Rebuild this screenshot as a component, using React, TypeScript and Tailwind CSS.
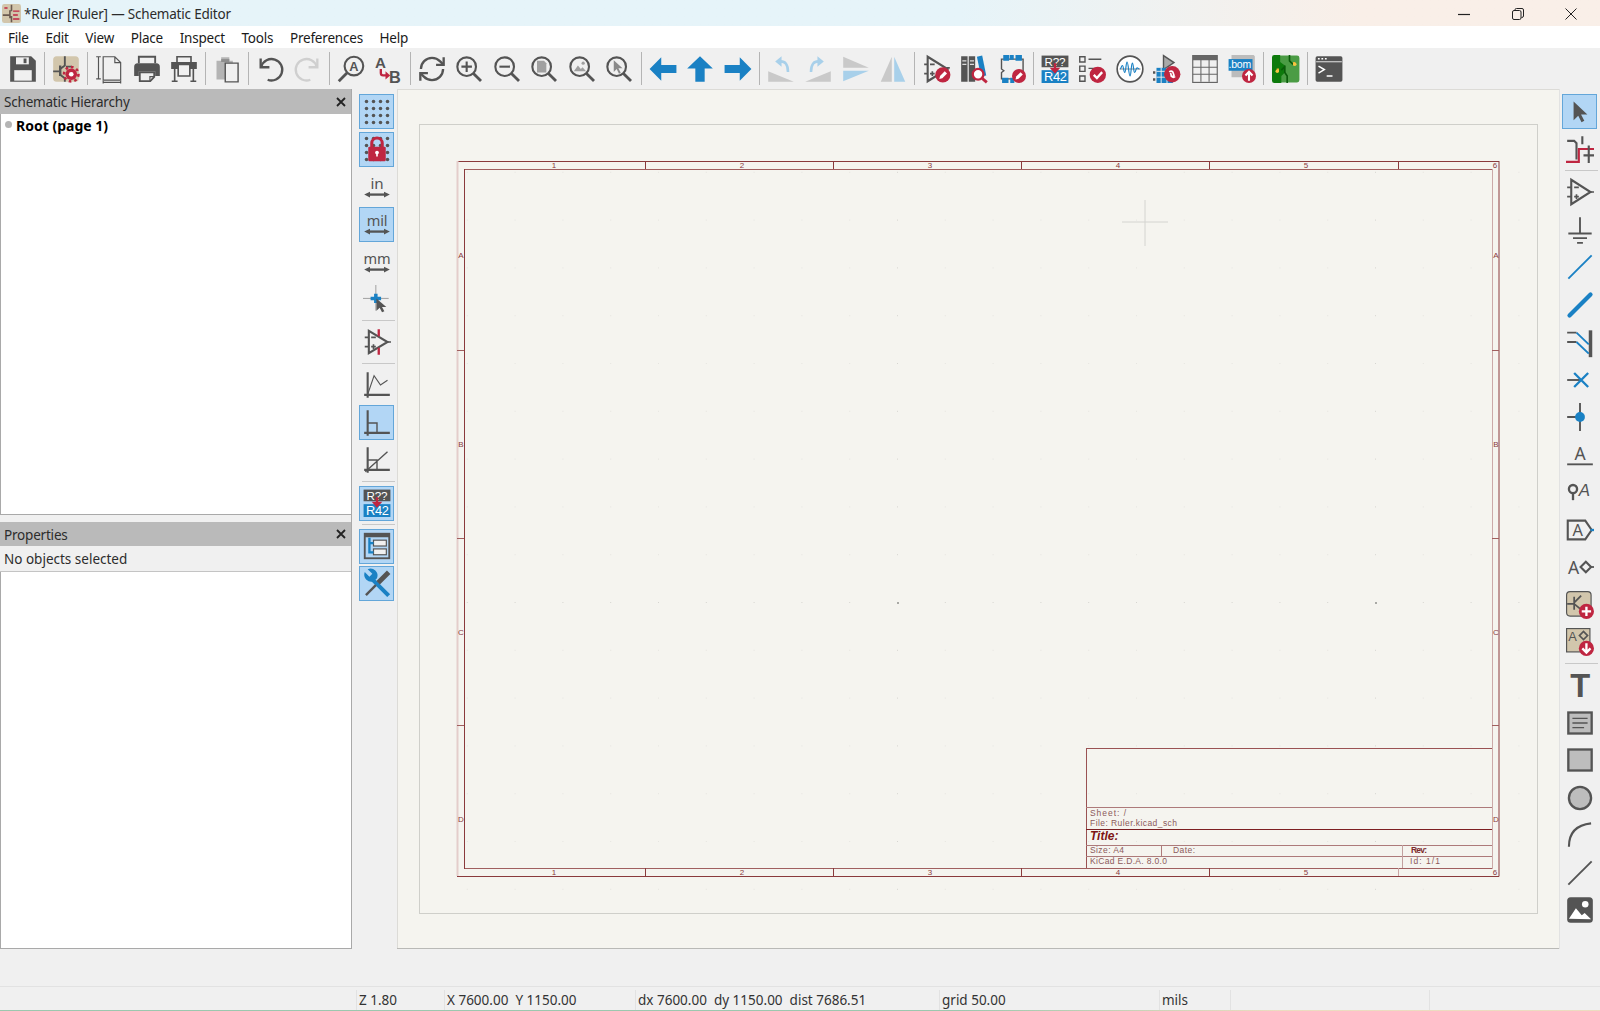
import type { ReactNode } from "react";

const D = "#545454";
const B = "#1a81c4";
const R = "#bf2641";
const TAN = "#d2c6ac";

function Ico({ children, className = "w-[28px] h-[28px]" }: { children: ReactNode; className?: string }) {
  return (
    <svg viewBox="0 0 24 24" className={`${className} overflow-visible`} fill="none" strokeLinecap="butt">
      {children}
    </svg>
  );
}

function Btn({ active, children }: { active?: boolean; children: ReactNode }) {
  return (
    <div
      className={`flex shrink-0 items-center justify-center w-[35px] h-[35px] ${
        active ? "bg-[#b2d6f5] border border-[#63a6d9]" : ""
      }`}
    >
      {children}
    </div>
  );
}

function Txt({ x, y, size, fill = D, bold, italic, children }: { x: number; y: number; size: number; fill?: string; bold?: boolean; italic?: boolean; children: ReactNode }) {
  return (
    <text
      x={x}
      y={y}
      fontSize={size}
      fill={fill}
      fontWeight={bold ? 700 : 400}
      fontStyle={italic ? "italic" : "normal"}
      className="font-['Liberation_Sans']"
    >
      {children}
    </text>
  );
}

// small red badge with white content, used by several tools
function Badge({ cx = 18, cy = 18, r = 5.5, children }: { cx?: number; cy?: number; r?: number; children?: ReactNode }) {
  return (
    <>
      <circle cx={cx} cy={cy} r={r} fill={R} />
      {children}
    </>
  );
}

const Save = () => (
  <Ico>
    <path d="M1 1h18l4 4v18H1z" fill={D} />
    <path d="M6 2h11v6H6z" fill="#f0f0f0" />
    <path d="M12.5 3h2.5v4h-2.5z" fill={D} />
    <path d="M4.5 13h15v9h-15z" fill="#f0f0f0" />
  </Ico>
);

const SchSetup = () => (
  <Ico>
    <rect x="1" y="1" width="22" height="22" rx="3" fill={TAN} />
    <path d="M11 1v8l-4 3v5l4 3v3M1 14h6M12 10l5 0" stroke={D} strokeWidth="1.6" />
    <path d="M7 9v9" stroke={D} strokeWidth="2" />
    <circle cx="16.5" cy="16.5" r="5" fill={R} />
    <circle cx="16.5" cy="16.5" r="6.2" stroke={R} strokeWidth="2.2" strokeDasharray="2.2 2.6" />
    <circle cx="16.5" cy="16.5" r="2" fill="#fff" />
  </Ico>
);

const PageSetup = () => (
  <Ico>
    <path d="M7 1.5h10l5 5v15H7zM17 1.5v5h5" stroke={D} strokeWidth="1" />
    <path d="M3 1.5v19M1 1.5h4M1 20.5h4M7 23.5h15M7 22v2.5M22 22v2.5" stroke={D} strokeWidth="1" />
  </Ico>
);

const Print = () => (
  <Ico>
    <path d="M5 7V1.5h14V7" stroke={D} strokeWidth="1.6" />
    <path d="M1 10a3 3 0 013-3h16a3 3 0 013 3v8h-4v-4H5v4H1z" fill={D} />
    <path d="M5.8 14.8h12.4v4l-3.4 3.6h-9z" stroke={D} strokeWidth="1.6" fill="#f0f0f0" />
    <path d="M14.5 22v-3.5h3.5" stroke={D} strokeWidth="1" />
  </Ico>
);

const Plot = () => (
  <Ico>
    <path d="M6 6V1.5h12V6" stroke={D} strokeWidth="1.4" />
    <path d="M1 6h22v6H1z" fill={D} />
    <path d="M7 8h10v10H7z" stroke={D} strokeWidth="1.4" fill="#f0f0f0" />
    <path d="M4 12v10M20 12v10M1.5 22.5h5M17.5 22.5h5" stroke={D} strokeWidth="1.4" />
  </Ico>
);

const Paste = () => (
  <Ico>
    <path d="M3 5h4V2h7v3h3v16H3z" fill="#b4b4b4" />
    <path d="M10.5 7h7l4 0v16h-11z" fill="#f0f0f0" stroke={D} strokeWidth="1.2" />
    <path d="M7 3.5h7V6H7z" fill="#8e8e8e" />
  </Ico>
);

const Undo = ({ c = D, flip }: { c?: string; flip?: boolean }) => (
  <Ico>
    <g transform={flip ? "translate(24 0) scale(-1 1)" : undefined} stroke={c} strokeWidth="2">
      <path d="M4 3v7.5h7.5" />
      <path d="M4.5 10A9.2 9.2 0 1 1 10 21.2" />
    </g>
  </Ico>
);

const Find = () => (
  <Ico>
    <circle cx="14.5" cy="9.5" r="8" stroke={D} strokeWidth="1.8" />
    <path d="M8.5 15.5l-7 7" stroke={D} strokeWidth="2.4" />
    <Txt x={10.5} y={13.5} size={11} bold>A</Txt>
  </Ico>
);

const Replace = () => (
  <Ico>
    <Txt x={0} y={11} size={13} bold>A</Txt>
    <Txt x={12} y={24} size={14} bold>B</Txt>
    <path d="M5 12v3.5q0 2 2 2h3" stroke={R} strokeWidth="2" />
    <path d="M9 14l4 3.5-4 3.5z" fill={R} />
  </Ico>
);

const Refresh = () => (
  <Ico>
    <g stroke={D} strokeWidth="2">
      <path d="M2.5 12a9.5 9.5 0 0 1 9.5-9.5 10 10 0 0 1 7 3L22 8.5" />
      <path d="M22 2v6.5h-6.5" />
      <path d="M21.5 12a9.5 9.5 0 0 1-9.5 9.5 10 10 0 0 1-7-3L2 15.5" />
      <path d="M2 22v-6.5h6.5" />
    </g>
  </Ico>
);

function Lens({ children }: { children?: ReactNode }) {
  return (
    <Ico>
      <circle cx="10" cy="10" r="8" stroke={D} strokeWidth="1.8" />
      <path d="M15.8 15.8l6.5 6.5" stroke={D} strokeWidth="2.4" />
      {children}
    </Ico>
  );
}

const ArrowLeft = () => (
  <Ico>
    <path d="M.5 12L10.5 2v6.5h13v7h-13V22z" fill={B} />
  </Ico>
);
const ArrowUp = () => (
  <Ico>
    <path d="M12 1l11 10.5h-7V23H8V11.5H1z" fill={B} />
  </Ico>
);
const ArrowRight = () => (
  <Ico>
    <path d="M23.5 12L13.5 2v6.5H.5v7h13V22z" fill={B} />
  </Ico>
);

const RotateCcw = ({ flip }: { flip?: boolean }) => (
  <Ico>
    <g transform={flip ? "translate(24 0) scale(-1 1)" : undefined}>
      <path d="M1 23V14l22 9z" fill="#c9c9c9" />
      <path d="M11 5.5q7-.5 7 9" stroke="#a8d0ea" strokeWidth="2.2" />
      <path d="M7 5.5l5.5-4.5v9z" fill="#a8d0ea" />
    </g>
  </Ico>
);
const MirrorH = () => (
  <Ico>
    <path d="M1 1.5l22 9.5H1z" fill="#c9c9c9" />
    <path d="M1 13.5h22L1 22.5z" fill="#a8d0ea" />
  </Ico>
);
const MirrorV = () => (
  <Ico>
    <path d="M11 1.5V23H1.5z" fill="#c9c9c9" />
    <path d="M13 1.5V23h9.5z" fill="#a8d0ea" />
  </Ico>
);

const SymEdit = () => (
  <Ico>
    <path d="M4 1.5v21L21 12z" stroke={D} strokeWidth="1.8" />
    <path d="M1 8h3M1 16h3M6 8h4M6 16h4M8 14v4" stroke={D} strokeWidth="1.4" />
    <path d="M20 11h3" stroke={D} strokeWidth="1.4" />
    <Badge cx={17} cy={17} r={6.5}>
      <path d="M14 20.5l.6-2.6 4-4 2 2-4 4z" fill="#fff" />
    </Badge>
  </Ico>
);

const LibBrowse = () => (
  <Ico>
    <path d="M1 1h5.5v22H1zM7.5 1H13v22H7.5z" fill={D} />
    <path d="M2 5h3.5M2 8h3.5M8.5 5H12M8.5 8H12" stroke="#ddd" strokeWidth="1" />
    <path d="M14.5 1.5l4.5-1 3.5 17-4.5 1z" fill={B} />
    <circle cx="15.5" cy="16.5" r="4.6" fill="#fff" stroke={R} strokeWidth="2" />
    <path d="M19 20l4 3.5" stroke={R} strokeWidth="2.4" />
  </Ico>
);

const FpEdit = () => (
  <Ico>
    <path d="M3 3.5h18.500v17H3V15l2-1.500-2-1.500V9.500z" stroke={D} strokeWidth="1.200" />
    <path d="M4.500 0h5v5h-5zM10 0h3.500v4h-3.500zM15 0h5.500v5H15zM3.500 19.500h5.500V24H3.500zM10.500 19.500h3.500V24h-3.500z" fill={B} />
    <Badge cx={18} cy={18} r={6}>
      <path d="M15 21l.6-2.6 3.700-3.700 2 2-3.700 3.700z" fill="#fff" />
    </Badge>
  </Ico>
);

const Annotate = () => (
  <Ico>
    <rect x="0.5" y="0.5" width="23" height="10" fill={D} />
    <rect x="0.5" y="13" width="23" height="11" fill={B} />
    <Txt x={3} y={9} size={10} fill="#fff">R??</Txt>
    <Txt x={2.5} y={22.5} size={11} fill="#fff">R42</Txt>
    <path d="M12 7v5" stroke={R} strokeWidth="2" />
    <path d="M7.5 11h9L12 16z" fill={R} />
  </Ico>
);

const Erc = () => (
  <Ico>
    <path d="M1.5 1.5h4.5V6H1.5zM1.5 9.5h4.5V14H1.5zM1.5 18h4.5v4.5H1.5z" stroke={D} strokeWidth="1.2" />
    <path d="M9 3.7h11M9 11.5h5" stroke={D} strokeWidth="1.2" />
    <circle cx="17" cy="17" r="7" fill={R} />
    <path d="M13.5 17l2.7 2.7 4.5-5" stroke="#fff" strokeWidth="2" />
  </Ico>
);

const Sim = () => (
  <Ico>
    <circle cx="12" cy="12" r="11" fill="#fff" stroke={D} strokeWidth="1.4" />
    <path d="M3 12h18" stroke={D} strokeWidth="0.6" />
    <path d="M3.5 12c1 0 1-3 2-3s1 6 2 6 1-9 2-9 1.500 12 2.500 12 1-11 2-11 1 8 2 8 1-4 2-4 1 1 2 1" stroke={B} strokeWidth="1" />
  </Ico>
);

const Assign = () => (
  <Ico>
    <path d="M9 0.5v12l9-6z" fill="#a9a9a9" stroke={D} strokeWidth="1.2" />
    <path d="M0 14h2v2H0zM0 20h2v2H0z" fill={D} />
    <path d="M3 11h14v13H3z" fill={B} />
    <path d="M3 14h12M3 19h12M7 11v13M12 11v13" stroke="#f0f0f0" strokeWidth="0.8" />
    <circle cx="16.5" cy="16.5" r="7" fill={R} />
    <path d="M14 14.5a2 2 0 013 0l1 3a2 2 0 01-3 0M19 18.5a2 2 0 01-3 0l-1-3" stroke="#fff" strokeWidth="1.4" />
  </Ico>
);

const Table = () => (
  <Ico>
    <rect x="1.5" y="0.5" width="21" height="23" stroke="#666" strokeWidth="1" />
    <path d="M1.5 0.5h21v4h-21z" fill="#666" />
    <path d="M1.5 10.500h21M1.5 16.500h21M8.500 4v19M15.500 4v19" stroke="#666" strokeWidth="0.900" />
  </Ico>
);

const Bom = () => (
  <Ico>
    <path d="M3 0h19l1 1v18H3z" fill="#bcbcbc" />
    <path d="M0.5 3.5H21v10H0.5z" fill={B} />
    <Txt x={0.5} y={11.5} size={9} fill="#fff">.bom</Txt>
    <circle cx="18" cy="18" r="6" fill={R} />
    <path d="M18 22v-7M15 17.5l3-3.2 3 3.2" stroke="#fff" strokeWidth="1.8" />
  </Ico>
);

const Pcb = () => (
  <Ico>
    <rect x="0.5" y="0.5" width="23" height="23" rx="2" fill="#4b9c45" />
    <path d="M7 0v6l4 3v6l-3 3v6H2q-2 0-2-2V2q0-2 2-2z" fill="#0d7a0c" />
    <path d="M15 0v5l3 3M8 13l3-3M13 24v-6l-2-3V9" stroke="#0a5c0a" strokeWidth="1.4" />
    <path d="M4 13h2M18 7.5h2" stroke="#e8b22d" strokeWidth="3" />
    <circle cx="4.5" cy="14" r="1.5" fill="#f6c542" />
    <circle cx="19.5" cy="8" r="1.5" fill="#f6c542" />
  </Ico>
);

const Term = () => (
  <Ico>
    <rect x="0.5" y="1" width="23" height="22" rx="1.5" fill={D} />
    <path d="M1 5.8h22" stroke="#f0f0f0" strokeWidth="0.8" />
    <path d="M2.5 3.2h1.5M5.5 3.2H7M8.5 3.2H10" stroke="#fff" strokeWidth="1.2" />
    <path d="M3 9.5l5 3-5 3" stroke="#fff" strokeWidth="1.3" />
    <path d="M10 18h5" stroke="#fff" strokeWidth="1.3" />
  </Ico>
);

const Dots = ({ c = D }: { c?: string }) => (
  <>
    {[3, 9, 15, 21].map((y) =>
      [3, 9, 15, 21].map((x) => <circle key={`${x}-${y}`} cx={x} cy={y} r="1.5" fill={c} />)
    )}
  </>
);

const Lock = () => (
  <Ico>
    <Dots />
    <path d="M7.5 11V7a4.5 4.5 0 019 0v4" stroke={R} strokeWidth="2.6" />
    <rect x="4.5" y="10" width="15" height="12.5" rx="1" fill={R} />
    <circle cx="12" cy="15" r="1.6" fill="#fff" />
    <path d="M11.3 15h1.4v3.5h-1.4z" fill="#fff" />
  </Ico>
);

const Unit = ({ t }: { t: string }) => (
  <Ico>
    <text x="12" y="14" fontSize={t === "in" ? 13 : 12.5} textAnchor="middle" fill={D} className="font-['Noto_Sans']">
      {t}
    </text>
    <path d="M4 18.500h16" stroke={D} strokeWidth="2" />
    <path d="M1 18.500l5-2.500v5zM23 18.500l-5-2.500v5z" fill={D} />
  </Ico>
);

const CursorCross = () => (
  <Ico>
    <path d="M11 0v22M0 11.500h22" stroke="#8f8f8f" strokeWidth="0.700" />
    <path d="M11 7.500v8M6.500 11.500h9" stroke={B} strokeWidth="3" />
    <path d="M11.500 11.500v10.500l2.800-2.400 2 3.800 2-.9-2-3.700h3.700z" fill={D} />
  </Ico>
);

const OpampPin = () => (
  <Ico>
    <path d="M5 2.5v19L21 12z" stroke={D} strokeWidth="1.8" />
    <path d="M1.5 8H5M1.5 16H5M21 12h3M7 8h4M7 16h4M9 14v4" stroke={D} strokeWidth="1.4" />
    <path d="M13.5 1v6M13.5 17v6" stroke={R} strokeWidth="2" />
  </Ico>
);

const LineAny = () => (
  <Ico>
    <path d="M4 1v22M1 20.5h22" stroke={D} strokeWidth="1.8" />
    <path d="M4 20L9.5 4l5.5 8 6-4" stroke={D} strokeWidth="1" />
  </Ico>
);
const Line90 = () => (
  <Ico>
    <path d="M4 1v22M1 20.5h22" stroke={D} strokeWidth="1.8" />
    <path d="M4 12h8v8" stroke={D} strokeWidth="1.2" />
  </Ico>
);
const Line45 = () => (
  <Ico>
    <path d="M4 1v22M1 20.5h22" stroke={D} strokeWidth="1.8" />
    <path d="M2 22L21 5M4 12h8v8" stroke={D} strokeWidth="1.2" />
  </Ico>
);

const HierPanel = () => (
  <Ico>
    <rect x="1.5" y="1.5" width="21" height="21" stroke={D} strokeWidth="1.6" />
    <path d="M1.5 1.5h21v3h-21z" fill={D} />
    <rect x="9" y="7" width="11" height="5" fill="#f0f0f0" stroke={D} strokeWidth="1" />
    <rect x="9" y="14.5" width="11" height="5" fill="#f0f0f0" stroke={D} strokeWidth="1" />
    <path d="M5.5 5v12.5H9M5.5 9.5H9" stroke={B} strokeWidth="2" />
  </Ico>
);

const Tools = () => (
  <Ico>
    <path d="M22 22L8 8" stroke={B} strokeWidth="3.500" />
    <path d="M9.500 9.500A6 6 0 011.500 1.800l4 4 2.500-2.500-4-4a6 6 0 018 7.700z" fill={B} />
    <path d="M11 13L2.500 21.500" stroke={D} strokeWidth="2" />
    <path d="M13 11l9-9" stroke={D} strokeWidth="4.200" />
  </Ico>
);

const Select = () => (
  <Ico>
    <path d="M6.500 3v16l4-3.800 2.800 5.500 2.400-1.100-2.800-5.400h5.400z" fill={D} />
  </Ico>
);

const HierNav = () => (
  <Ico>
    <path d="M1 5h6l2 2v14M14 1v7" stroke={D} strokeWidth="1.8" />
    <path d="M0 23h11V12h13" stroke={R} strokeWidth="1.8" />
    <path d="M15 17.500h9M19.500 9v15" stroke={D} strokeWidth="1.8" />
  </Ico>
);

const Opamp = () => (
  <Ico>
    <path d="M4.5 1.5v21L21 12z" stroke={D} strokeWidth="1.8" />
    <path d="M1 8h3.5M1 16h3.5M21 12h3M7 8h4M7 16h4M9 14v4" stroke={D} strokeWidth="1.4" />
  </Ico>
);

const Gnd = () => (
  <Ico>
    <path d="M12 1v14" stroke={D} strokeWidth="1.6" />
    <path d="M2 15h20M6 19h12M9.5 23h5" stroke={D} strokeWidth="1.6" />
  </Ico>
);

const Wire = () => (
  <Ico>
    <path d="M2 22L22 2" stroke={B} strokeWidth="1.6" />
  </Ico>
);
const Bus = () => (
  <Ico>
    <path d="M3 21L21 3" stroke={B} strokeWidth="3.6" strokeLinecap="round" />
  </Ico>
);
const BusEntry = () => (
  <Ico>
    <path d="M21 2v23" stroke={D} strokeWidth="3" />
    <path d="M1 4h8M1 12h8" stroke={D} strokeWidth="1.6" />
    <path d="M9 4l10.500 10M9 12l10.500 10" stroke={B} strokeWidth="1.6" />
  </Ico>
);
const NoConn = () => (
  <Ico>
    <path d="M1 12h12" stroke={D} strokeWidth="1.6" />
    <path d="M7 6l12 12M19 6L7 18" stroke={B} strokeWidth="2" />
  </Ico>
);
const Junction = () => (
  <Ico>
    <path d="M1 12h11M12 0v24" stroke={D} strokeWidth="1.6" />
    <circle cx="12" cy="12" r="4.2" fill={B} />
  </Ico>
);
const Label = () => (
  <Ico>
    <text x="12" y="16" fontSize="15" textAnchor="middle" fill={D} className="font-['Noto_Sans']">A</text>
    <path d="M1 20h22" stroke={D} strokeWidth="1.6" />
  </Ico>
);
const NetClass = () => (
  <Ico>
    <circle cx="6" cy="9.500" r="3.500" stroke={D} strokeWidth="2" />
    <path d="M6 13v6" stroke={D} strokeWidth="2" />
    <Txt x={11} y={15.500} size={14.500} italic>A</Txt>
  </Ico>
);
const HierLabel = () => (
  <Ico>
    <path d="M1.500 4h15l5.500 8-5.500 8h-15z" stroke={D} strokeWidth="1.800" />
    <path d="M21 12h3" stroke={B} strokeWidth="2" />
    <text x="10" y="17" fontSize="14" textAnchor="middle" fill={D} className="font-['Noto_Sans']">A</text>
  </Ico>
);
const SheetPin = () => (
  <Ico>
    <text x="6.500" y="18" fontSize="15" textAnchor="middle" fill={D} className="font-['Noto_Sans']">A</text>
    <path d="M12.500 12l4.500-4.500 4.500 4.500-4.500 4.500z" stroke={D} strokeWidth="1.800" />
    <path d="M21.500 12H24" stroke={D} strokeWidth="1.500" />
  </Ico>
);
const AddSheet = () => (
  <Ico>
    <rect x="0.500" y="0.500" width="21" height="21" rx="3" fill={TAN} stroke={D} strokeWidth="1" />
    <path d="M7 5v11M7 10L13 4M7 11l6 5M1 11h6" stroke={D} strokeWidth="1.500" />
    <circle cx="17.500" cy="17.500" r="6.500" fill={R} />
    <path d="M17.500 13.500v8M13.500 17.500h8" stroke="#fff" strokeWidth="2" />
  </Ico>
);
const ImportPin = () => (
  <Ico>
    <rect x="0.500" y="0.500" width="20" height="20" fill={TAN} stroke={D} strokeWidth="1" />
    <Txt x={2} y={11} size={11}>A</Txt>
    <path d="M11.500 6.500l3.500-3.500 3.500 3.500-3.500 3.500z" stroke={D} strokeWidth="1.400" />
    <circle cx="17.500" cy="17.500" r="6.500" fill={R} />
    <path d="M17.500 13v7.500M14 17.500l3.500 3.500 3.500-3.500" stroke="#fff" strokeWidth="2" />
  </Ico>
);
const BigT = () => (
  <Ico>
    <text x="12" y="22" fontSize="28" fontWeight="700" textAnchor="middle" fill={D} className="font-['Liberation_Sans']">T</text>
  </Ico>
);
const TextBox = () => (
  <Ico>
    <rect x="2" y="3" width="20" height="18" fill="#bdbdbd" stroke={D} strokeWidth="2" />
    <path d="M5.500 8h13M5.500 12h13M5.500 16h10" stroke={D} strokeWidth="1.200" />
  </Ico>
);
const Rect = () => (
  <Ico>
    <rect x="2" y="3" width="20" height="18" fill="#bdbdbd" stroke={D} strokeWidth="2" />
  </Ico>
);
const Circ = () => (
  <Ico>
    <circle cx="12" cy="12" r="9.500" fill="#bdbdbd" stroke={D} strokeWidth="2" />
  </Ico>
);
const Arc = () => (
  <Ico>
    <path d="M2.500 22Q2.500 4 21.500 2" stroke={D} strokeWidth="1.800" />
  </Ico>
);
const Line = () => (
  <Ico>
    <path d="M2 22L22 2" stroke={D} strokeWidth="1.600" />
  </Ico>
);
const Picture = () => (
  <Ico>
    <rect x="1" y="1" width="22" height="22" rx="3" fill={D} />
    <circle cx="16.500" cy="7" r="2.800" fill="#fff" />
    <path d="M2.500 19.500l6-9 5 6 2.500-2 5.500 5.500z" fill="#fff" />
  </Ico>
);

const VSep = () => (
  <div className="w-[3px] h-[33px] shrink-0 flex justify-center">
    <div className="w-px bg-[#b4b4b4]" />
  </div>
);

function HSep() {
  return <div className="h-px w-[33px] my-[1px] shrink-0 self-center bg-[#c8c8c8]" />;
}

const topTools: ReactNode[][] = [
  [<Save />],
  [<SchSetup />],
  [<PageSetup />, <Print />, <Plot />],
  [<Paste />],
  [<Undo />, <Undo c="#cfcfcf" flip />],
  [<Find />, <Replace />],
  [
    <Refresh />,
    <Lens>
      <path d="M10 5.500v9M5.500 10h9" stroke={D} strokeWidth="1.800" />
    </Lens>,
    <Lens>
      <path d="M5.500 10h9" stroke={D} strokeWidth="1.800" />
    </Lens>,
    <Lens>
      <path d="M6 5h6l2 2v8H6z" fill="#a0a0a0" />
    </Lens>,
    <Lens>
      <path d="M5 14l3.500-5 2.500 3 1.500-1.500 3 3.500z" fill="#a0a0a0" />
      <circle cx="13" cy="7" r="1.400" fill="#a0a0a0" />
    </Lens>,
    <Lens>
      <path d="M7.500 4.500v10l2.500-2.500 2 4 1.500-.8-2-3.800h3.500z" fill="#8a8a8a" />
    </Lens>,
  ],
  [<ArrowLeft />, <ArrowUp />, <ArrowRight />],
  [<RotateCcw />, <RotateCcw flip />, <MirrorH />, <MirrorV />],
  [<SymEdit />, <LibBrowse />, <FpEdit />],
  [<Annotate />, <Erc />, <Sim />, <Assign />, <Table />, <Bom />],
  [<Pcb />],
  [<Term />],
];

function Sheet() {
  const cols = Array.from({ length: 24 }, (_, i) => i);
  const rows = Array.from({ length: 17 }, (_, i) => i);
  const topTicks = [645, 833, 1021, 1209, 1398];
  const sideTicks = [350, 538, 725];
  const numX = [554, 742, 930, 1118, 1306, 1495];
  const letters: [string, number][] = [
    ["A", 258],
    ["B", 447],
    ["C", 635],
    ["D", 822],
  ];
  const small = "font-['Liberation_Sans']";
  return (
    <svg width={1162} height={860} viewBox="397 89 1162 860" className="block bg-[#f5f4ef] tracking-normal">
      {rows.map((j) =>
        cols.map((i) => {
          const major = i % 10 === 0 && j % 10 === 0 && i > 0 && j > 0;
          const mid = i % 10 === 0 || j % 10 === 0;
          return (
            <rect
              key={`${i}-${j}`}
              x={419 + i * 47.8}
              y={124 + j * 47.8}
              width={major ? 2 : 1}
              height={major ? 2 : 1}
              fill={major ? "#a9a9a5" : mid ? "#d6d5d0" : "#e6e5e0"}
            />
          );
        })
      )}
      <path d="M397.500 89v860M397 89.500h1162" stroke="#dcdbd7" />
      <path d="M397 948.500h1162" stroke="#b9b9b6" />
      <rect x="419.500" y="124.500" width="1118" height="789" fill="none" stroke="#cfcfca" />

      <path d="M1122 222h46M1145 200v46" stroke="#d4d4d0" />

      {/* page frame */}
      <path d="M457 161.500h1042M1499 161v715.500H457" stroke="#8a3a3c" fill="none" />
      <path d="M457.500 161v715" stroke="#e4cdcb" strokeWidth="2" />
      <path d="M464 169.500h1028M464 868.500h1028" stroke="#a05f5f" fill="none" />
      <path d="M464.500 169v700" stroke="#8a3a3c" />
      <path d="M1492.500 169v700" stroke="#cba9a8" />
      {topTicks.map((x) => (
        <g key={x}>
          <path d={`M${x + 0.5} 161v8`} stroke="#8a3a3c" />
          <path d={`M${x + 0.5} 868v8`} stroke={x === 1398 ? "#c9a5a4" : "#8a3a3c"} />
        </g>
      ))}
      {sideTicks.map((y) => (
        <g key={y}>
          <path d={`M457 ${y + 0.5}h7`} stroke="#a05f5f" />
          <path d={`M1492 ${y + 0.5}h7`} stroke="#a05f5f" />
        </g>
      ))}
      {numX.map((x, i) => (
        <g key={x} fontSize="8" fill="#8a3a3c" textAnchor="middle" className={small}>
          <text x={x} y={168}>{i + 1}</text>
          <text x={x} y={875}>{i + 1}</text>
        </g>
      ))}
      {letters.map(([l, y]) => (
        <g key={l} fontSize="8" fill="#8a3a3c" textAnchor="middle" className={small}>
          <text x={461} y={y}>{l}</text>
          <text x={1496} y={y}>{l}</text>
        </g>
      ))}

      {/* title block */}
      <path d="M1086 748.500h406M1086.500 748v120" stroke="#9a5253" fill="none" />
      <path d="M1086 807.500h406M1086 845.500h406M1086 856.500h406" stroke="#ad7a7a" />
      <path d="M1086 829.500h406" stroke="#7d1f22" />
      <path d="M1161.500 845v11" stroke="#ad7a7a" />
      <path d="M1402.500 845v23" stroke="#c2a09f" />
      <g fill="#8c5a5a" className={small} fontSize="8.500">
        <text x={1090} y={816} textLength={36} lengthAdjust="spacing">Sheet: /</text>
        <text x={1090} y={826} textLength={87} lengthAdjust="spacing">File: Ruler.kicad_sch</text>
        <text x={1090} y={853} textLength={34} lengthAdjust="spacing">Size: A4</text>
        <text x={1173} y={853} textLength={22} lengthAdjust="spacing">Date:</text>
        <text x={1090} y={864} textLength={77} lengthAdjust="spacing">KiCad E.D.A. 8.0.0</text>
        <text x={1410} y={864} textLength={30} lengthAdjust="spacing">Id: 1/1</text>
        <text x={1411} y={853} fontWeight="700" fill="#7d2a2c" textLength={16} lengthAdjust="spacing">Rev:</text>
      </g>
      <text x={1090} y={840} fontSize="12" fontWeight="700" fontStyle="italic" fill="#7d1414" className={small}>
        Title:
      </text>
    </svg>
  );
}

function PanelHead({ title, h }: { title: string; h: string }) {
  return (
    <div className={`flex ${h} shrink-0 items-center justify-between bg-[#bababa] pl-[4px] pr-[5px] text-[#2c2c2c]`}>
      <span className="mt-[2px]">{title}</span>
      <svg viewBox="0 0 10 10" className="w-[10px] h-[10px]">
        <path d="M1 1l8 8M9 1l-8 8" stroke="#222" strokeWidth="1.800" />
      </svg>
    </div>
  );
}

export default function App() {
  return (
    <div className="flex h-[1011px] w-[1600px] flex-col overflow-hidden bg-[#f0f0f0] font-['Noto_Sans',sans-serif] text-[13.5px] tracking-[-0.2px] text-[#1a1a1a]">
      {/* title bar */}
      <div className="flex h-[26px] shrink-0 items-center bg-linear-to-r from-[#e6f4f9] from-60% to-[#f9efe8] to-85% pl-[2px] pt-[1px]">
        <svg viewBox="0 0 24 24" className="w-[19px] h-[19px]">
          <rect x="0" y="0" width="24" height="24" rx="3" fill={TAN} />
          <path d="M12 1v8M12 15v8M1 14h9M10 8v10" stroke="#6a5a50" strokeWidth="2" />
          <path d="M14 9h8M14 14h6M14 19h8M3 5h4" stroke={R} strokeWidth="1.800" />
        </svg>
        <span className="ml-[3px] mt-[1px] text-[#2b2b2b]">*Ruler [Ruler] — Schematic Editor</span>
        <div className="ml-auto flex pr-[2px]">
          <div className="flex w-[53.500px] justify-center">
            <svg viewBox="0 0 12 12" className="w-[12px] h-[12px]">
              <path d="M0 6.500h12" stroke="#222" strokeWidth="1.200" />
            </svg>
          </div>
          <div className="flex w-[53.500px] justify-center">
            <svg viewBox="0 0 12 12" className="w-[12px] h-[12px]">
              <rect x="0.500" y="2.500" width="8.500" height="9" rx="1.500" fill="none" stroke="#222" />
              <path d="M3 2.500V1.800Q3 .5 4.500 .5h5.500Q11.500 .5 11.500 2v6Q11.500 9.500 9.500 9.500" fill="none" stroke="#222" />
            </svg>
          </div>
          <div className="flex w-[53.500px] justify-center">
            <svg viewBox="0 0 12 12" className="w-[12px] h-[12px]">
              <path d="M.5 .5l11 11M11.500 .5l-11 11" stroke="#222" />
            </svg>
          </div>
        </div>
      </div>

      {/* menu */}
      <div className="flex h-[22px] shrink-0 items-center gap-[16.600px] bg-white pl-[8px] pt-[3px]">
        {["File", "Edit", "View", "Place", "Inspect", "Tools", "Preferences", "Help"].map((m) => (
          <span key={m}>{m}</span>
        ))}
      </div>

      {/* top toolbar */}
      <div className="flex h-[41px] shrink-0 items-center gap-[2.550px] pl-[5.500px]">
        {topTools.map((group, i) => (
          <div key={i} className="contents">
            {i > 0 && <VSep />}
            {group.map((tool, j) => (
              <Btn key={j}>{tool}</Btn>
            ))}
          </div>
        ))}
      </div>

      <div className="flex h-[860px] shrink-0">
        {/* left panels */}
        <div className="flex w-[352px] shrink-0 flex-col border-r border-[#a9a9a9]">
          <PanelHead title="Schematic Hierarchy" h="h-[25px]" />
          <div className="flex h-[401px] items-start gap-[4px] border-l border-b border-[#a9a9a9] bg-white pl-[4px] pt-[2px] text-[14px] tracking-normal font-bold text-black">
            <span className="mt-[5px] h-[7px] w-[7px] rounded-full bg-[#b5b5b5]" />
            <span className="-mt-[1px]">Root (page 1)</span>
          </div>
          <div className="h-[7px]" />
          <PanelHead title="Properties" h="h-[24px]" />
          <div className="flex h-[26px] items-center border-b border-[#c4c4c4] pl-[4px] pt-[2px] tracking-normal text-[#2c2c2c]">
            No objects selected
          </div>
          <div className="flex-1 border-l border-b border-[#a9a9a9] bg-white" />
        </div>

        {/* left toolbar */}
        <div className="flex w-[45px] shrink-0 flex-col gap-[2.500px] pl-[7px] pt-[5px]">
          <Btn active><Ico><Dots /></Ico></Btn>
          <Btn active><Lock /></Btn>
          <Btn><Unit t="in" /></Btn>
          <Btn active><Unit t="mil" /></Btn>
          <Btn><Unit t="mm" /></Btn>
          <Btn><CursorCross /></Btn>
          <HSep />
          <Btn><OpampPin /></Btn>
          <HSep />
          <Btn><LineAny /></Btn>
          <Btn active><Line90 /></Btn>
          <Btn><Line45 /></Btn>
          <HSep />
          <Btn active><Annotate /></Btn>
          <HSep />
          <Btn active><HierPanel /></Btn>
          <Btn active><Tools /></Btn>
        </div>

        <Sheet />

        {/* right toolbar */}
        <div className="flex w-[41px] shrink-0 flex-col gap-[2.500px] border-l border-[#e2e2e2] pl-[2px] pt-[5px]">
          <Btn active><Select /></Btn>
          <Btn><HierNav /></Btn>
          <HSep />
          <Btn><Opamp /></Btn>
          <Btn><Gnd /></Btn>
          <Btn><Wire /></Btn>
          <Btn><Bus /></Btn>
          <Btn><BusEntry /></Btn>
          <Btn><NoConn /></Btn>
          <Btn><Junction /></Btn>
          <Btn><Label /></Btn>
          <Btn><NetClass /></Btn>
          <Btn><HierLabel /></Btn>
          <Btn><SheetPin /></Btn>
          <Btn><AddSheet /></Btn>
          <Btn><ImportPin /></Btn>
          <HSep />
          <Btn><BigT /></Btn>
          <Btn><TextBox /></Btn>
          <Btn><Rect /></Btn>
          <Btn><Circ /></Btn>
          <Btn><Arc /></Btn>
          <Btn><Line /></Btn>
          <Btn><Picture /></Btn>
        </div>
      </div>

      <div className="h-[37px] shrink-0" />

      {/* status bar */}
      <div className="flex h-[24px] shrink-0 border-t border-[#e2e2e2] pt-[3px] tracking-normal text-[#333] whitespace-pre">
        <div className="w-[356px]" />
        <div className="w-[88px] border-l border-[#e2e2e2] pl-[2px]">Z 1.80</div>
        <div className="w-[191px] border-l border-[#e2e2e2] pl-[2px]">X 7600.00  Y 1150.00</div>
        <div className="w-[304px] border-l border-[#e2e2e2] pl-[2px]">dx 7600.00  dy 1150.00  dist 7686.51</div>
        <div className="w-[220px] border-l border-[#e2e2e2] pl-[2px]">grid 50.00</div>
        <div className="w-[71px] border-l border-[#e2e2e2] pl-[2px]">mils</div>
        <div className="w-[199px] border-l border-[#e2e2e2]" />
        <div className="flex-1 border-l border-[#e2e2e2]" />
      </div>
      <div className="h-px shrink-0 bg-linear-to-r from-[#9cc7ae] from-60% to-[#ecdcc0] to-80%" />
    </div>
  );
}
